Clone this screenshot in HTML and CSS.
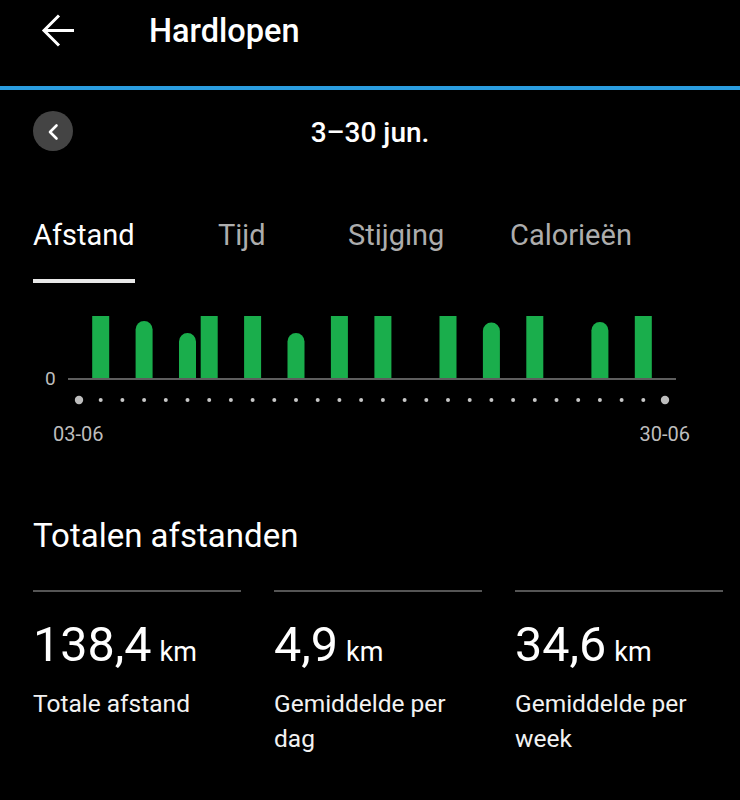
FILE: index.html
```html
<!DOCTYPE html>
<html lang="nl">
<head>
<meta charset="utf-8">
<title>Hardlopen</title>
<link rel="stylesheet" href="styles.css">
</head>
<body>
<header class="topbar">
  <svg class="back" width="34" height="34" viewBox="0 0 34 34">
    <path d="M33 16.5 H3 M18 1.5 L3 16.5 L18 31.5" fill="none" stroke="#fff" stroke-width="3"/>
  </svg>
  <h1 class="title">Hardlopen</h1>
</header>
<div class="accent"></div>

<div class="daterow">
  <div class="prev">
    <svg width="40" height="40" viewBox="0 0 40 40">
      <path d="M23.5 14.5 L17 21 L23.5 27.5" fill="none" stroke="#fff" stroke-width="2.6" stroke-linecap="round" stroke-linejoin="round"/>
    </svg>
  </div>
  <div class="range">3–30 jun.</div>
  <div></div>
</div>

<nav class="tabs">
  <div class="tab t1"><span class="active">Afstand</span></div>
  <div class="tab t2"><span>Tijd</span></div>
  <div class="tab t3"><span>Stijging</span></div>
  <div class="tab t4"><span>Calorieën</span></div>
</nav>

<svg class="chart" width="740" height="110" viewBox="0 0 740 110">
  <g class="bars">
    <rect x="92.2" y="16" width="17" height="63"/>
    <path d="M135.6 79 V29.5 A8.5 8.5 0 0 1 152.6 29.5 V79 Z"/>
    <path d="M179 79 V41.5 A8.5 8.5 0 0 1 196 41.5 V79 Z"/>
    <rect x="200.7" y="16" width="17" height="63"/>
    <rect x="244.1" y="16" width="17" height="63"/>
    <path d="M287.5 79 V41.5 A8.5 8.5 0 0 1 304.5 41.5 V79 Z"/>
    <rect x="330.9" y="16" width="17" height="63"/>
    <rect x="374.4" y="16" width="17" height="63"/>
    <rect x="439.5" y="16" width="17" height="63"/>
    <path d="M482.9 79 V31 A8.5 8.5 0 0 1 499.9 31 V79 Z"/>
    <rect x="526.3" y="16" width="17" height="63"/>
    <path d="M591.4 79 V30.5 A8.5 8.5 0 0 1 608.4 30.5 V79 Z"/>
    <rect x="634.8" y="16" width="17" height="63"/>
  </g>
  <line class="axis" x1="68" y1="79" x2="676" y2="79"/>
  <text class="zero" x="45" y="85">0</text>
  <g class="dots">
    <circle class="big" cx="79" cy="100" r="4.2"/>
    <circle cx="100.7" cy="100" r="2"/>
    <circle cx="122.4" cy="100" r="2"/>
    <circle cx="144.1" cy="100" r="2"/>
    <circle cx="165.8" cy="100" r="2"/>
    <circle cx="187.5" cy="100" r="2"/>
    <circle cx="209.2" cy="100" r="2"/>
    <circle cx="230.9" cy="100" r="2"/>
    <circle cx="252.6" cy="100" r="2"/>
    <circle cx="274.3" cy="100" r="2"/>
    <circle cx="296.0" cy="100" r="2"/>
    <circle cx="317.7" cy="100" r="2"/>
    <circle cx="339.4" cy="100" r="2"/>
    <circle cx="361.1" cy="100" r="2"/>
    <circle cx="382.9" cy="100" r="2"/>
    <circle cx="404.6" cy="100" r="2"/>
    <circle cx="426.3" cy="100" r="2"/>
    <circle cx="448.0" cy="100" r="2"/>
    <circle cx="469.7" cy="100" r="2"/>
    <circle cx="491.4" cy="100" r="2"/>
    <circle cx="513.1" cy="100" r="2"/>
    <circle cx="534.8" cy="100" r="2"/>
    <circle cx="556.5" cy="100" r="2"/>
    <circle cx="578.2" cy="100" r="2"/>
    <circle cx="599.9" cy="100" r="2"/>
    <circle cx="621.6" cy="100" r="2"/>
    <circle cx="643.3" cy="100" r="2"/>
    <circle class="big" cx="665" cy="100" r="4.2"/>
  </g>
</svg>
<div class="xlabels">
  <span>03-06</span>
  <span>30-06</span>
</div>

<section class="totals">
  <h2 class="totals-title">Totalen afstanden</h2>
  <div class="stats">
    <div class="stat">
      <div class="value">138,4<span class="unit">km</span></div>
      <div class="label">Totale afstand</div>
    </div>
    <div class="stat">
      <div class="value">4,9<span class="unit">km</span></div>
      <div class="label">Gemiddelde per dag</div>
    </div>
    <div class="stat">
      <div class="value">34,6<span class="unit">km</span></div>
      <div class="label">Gemiddelde per week</div>
    </div>
  </div>
</section>
</body>
</html>
```
FILE: styles.css
```css
html, body {
  margin: 0;
  padding: 0;
  background: #000;
}
body {
  width: 740px;
  color: #fff;
  font-family: Roboto, "Noto Sans", "Liberation Sans", sans-serif;
}

.topbar {
  display: flex;
  align-items: center;
  height: 62px;
  padding: 0 0 24px 41px;
}
.back {
  display: block;
  flex: none;
}
.title {
  margin: 0 0 0 74px;
  font-size: 32.5px;
  line-height: 38px;
  font-weight: 500;
}
.accent {
  height: 4px;
  background: #2a9de0;
}

.daterow {
  display: grid;
  grid-template-columns: 1fr auto 1fr;
  align-items: center;
  padding: 0 33px;
  margin-top: 21px;
  height: 40px;
}
.prev {
  width: 40px;
  height: 40px;
  border-radius: 50%;
  background: #444;
}
.prev svg {
  display: block;
}
.range {
  font-size: 28px;
  line-height: 33px;
  font-weight: 500;
  padding-top: 2px;
}

.tabs {
  display: flex;
  padding-left: 33px;
  margin-top: 68px;
}
.tab {
  font-size: 29px;
  line-height: 33px;
  color: #adadad;
}
.t1 { width: 185px; }
.t2 { width: 130px; }
.t3 { width: 162px; }
.tab span {
  display: inline-block;
  padding-bottom: 27px;
  border-bottom: 4px solid transparent;
}
.tab span.active {
  color: #fff;
  border-bottom-color: #e8e8e8;
}

.chart {
  display: block;
  margin-top: 17px;
}
.bars rect,
.bars path {
  fill: #1aae4c;
}
.axis {
  stroke: #5e5e5e;
  stroke-width: 2;
}
.zero {
  font-family: Roboto, "Noto Sans", sans-serif;
  font-size: 19px;
  fill: #bdbdbd;
}
.dots circle {
  fill: #c8c8c8;
}
.dots circle.big {
  fill: #bdbdbd;
}

.xlabels {
  display: flex;
  justify-content: space-between;
  padding: 0 50px 0 53px;
  margin-top: 13px;
  font-size: 20px;
  line-height: 23px;
  color: #bdbdbd;
}

.totals {
  padding: 0 17px 0 33px;
}
.totals-title {
  margin: 71px 0 0;
  font-size: 33px;
  line-height: 38px;
  font-weight: 400;
}
.stats {
  display: grid;
  grid-template-columns: repeat(3, 208px);
  column-gap: 33px;
  margin-top: 35px;
}
.stat {
  border-top: 2px solid #555;
}
.value {
  padding-top: 25px;
  font-size: 48.5px;
  line-height: 56px;
}
.unit {
  font-size: 27px;
  margin-left: 8px;
}
.label {
  margin-top: 6px;
  font-size: 24.5px;
  line-height: 35px;
  color: #f2f2f2;
}
```
